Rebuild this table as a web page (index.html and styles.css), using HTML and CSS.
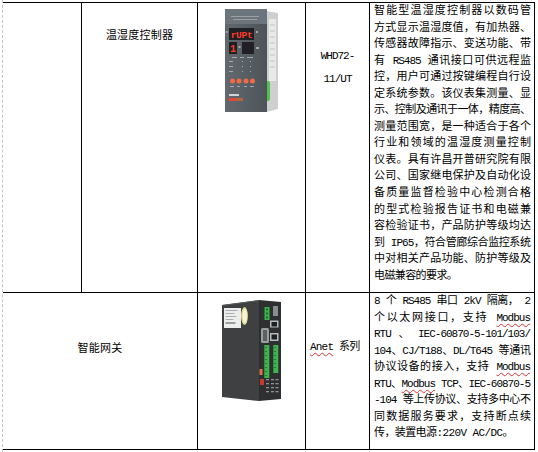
FILE: index.html
```html
<!DOCTYPE html>
<html lang="zh-CN">
<head>
<meta charset="utf-8">
<title>产品清单</title>
<link rel="stylesheet" href="styles.css">
</head>
<body>
<div class="page">
  <div class="spec">
    <div class="cell"></div>
    <div class="cell name name-top">温湿度控制器</div>
    <div class="cell pic pic-top">
      <svg width="54" height="104" viewBox="0 0 54 104">
        <defs>
          <linearGradient id="fp" x1="0" x2="1" y1="0" y2="0">
            <stop offset="0" stop-color="#626a70"/>
            <stop offset="1" stop-color="#4c5459"/>
          </linearGradient>
        </defs>
        <polygon points="41,2 53,4 53,100 41,103" fill="#cdd0cf"/>
        <rect x="44" y="10" width="7" height="62" fill="#e8eae9"/>
        <g stroke="#a9adac" stroke-width="0.6">
          <line x1="45" y1="16" x2="50" y2="16"/><line x1="45" y1="22" x2="50" y2="22"/>
          <line x1="45" y1="28" x2="50" y2="28"/><line x1="45" y1="34" x2="50" y2="34"/>
          <line x1="45" y1="40" x2="50" y2="40"/><line x1="45" y1="46" x2="50" y2="46"/>
          <line x1="45" y1="52" x2="50" y2="52"/><line x1="45" y1="58" x2="50" y2="58"/>
        </g>
        <rect x="40" y="72" width="5" height="20" rx="2" fill="#52c04f"/>
        <rect x="0" y="0" width="42" height="103" fill="url(#fp)"/>
        <rect x="0" y="0" width="42" height="15" fill="#6c757b"/>
        <g fill="#9aa2a7">
          <rect x="6" y="7" width="28" height="1"/>
          <rect x="8" y="10" width="24" height="1"/>
        </g>
        <rect x="4" y="19" width="25" height="12" fill="#202024"/>
        <text x="16.5" y="28.5" font-family="Liberation Mono, monospace" font-size="9.5" font-weight="bold" fill="#ff3a2a" text-anchor="middle" letter-spacing="-0.3">rUPt</text>
        <rect x="4" y="33" width="8" height="12" fill="#202024"/>
        <text x="8" y="43" font-family="Liberation Mono, monospace" font-size="10" font-weight="bold" fill="#ff3a2a" text-anchor="middle">1</text>
        <rect x="17" y="33" width="12" height="12" fill="#202024"/>
        <g fill="#a3aaaf">
          <rect x="1" y="22" width="1.5" height="2"/>
          <rect x="31" y="22" width="2" height="2"/>
          <rect x="31" y="38" width="3" height="2"/>
          <rect x="13.5" y="37" width="2" height="2"/>
          <rect x="7" y="48" width="5" height="1"/><rect x="15" y="48" width="4" height="1"/><rect x="22" y="48" width="6" height="1"/>
          <rect x="4" y="52" width="4" height="1"/><rect x="4" y="57" width="4" height="1"/><rect x="4" y="62" width="4" height="1"/>
          <rect x="17" y="52" width="1" height="1"/><rect x="25" y="52" width="1" height="1"/>
          <rect x="17" y="57" width="1" height="1"/><rect x="25" y="57" width="1" height="1"/>
          <rect x="17" y="62" width="1" height="1"/><rect x="25" y="62" width="1" height="1"/>
          <rect x="5" y="77" width="4" height="1"/><rect x="12" y="77" width="3" height="1"/>
          <rect x="19" y="77" width="3" height="1"/><rect x="25" y="77" width="4" height="1"/>
        </g>
        <g fill="#f36a45">
          <circle cx="7.5" cy="72" r="2.5"/><circle cx="14" cy="72" r="2.5"/>
          <circle cx="21" cy="72" r="2.5"/><circle cx="27.5" cy="72" r="2.5"/>
        </g>
        <rect x="4" y="85" width="10" height="2" fill="#d0d4d7"/>
        <rect x="4" y="89" width="7" height="3" fill="#e4462f"/>
        <rect x="11" y="89" width="7" height="3" fill="#b9623f"/>
      </svg>
    </div>
    <div class="cell model model-top">WHD72-<br>11/UT</div>
    <div class="cell desc">
      <span class="ln">智能型温湿度控制器以数码管</span>
      <span class="ln">方式显示温湿度值，有加热器、</span>
      <span class="ln">传感器故障指示、变送功能、带</span>
      <span class="ln">有 RS485 通讯接口可供远程监</span>
      <span class="ln">控，用户可通过按键编程自行设</span>
      <span class="ln">定系统参数。该仪表集测量、显</span>
      <span class="ln">示、控制及通讯于一体，精度高、</span>
      <span class="ln">测量范围宽，是一种适合于各个</span>
      <span class="ln">行业和领域的温湿度测量控制</span>
      <span class="ln">仪表。具有许昌开普研究院有限</span>
      <span class="ln">公司、国家继电保护及自动化设</span>
      <span class="ln">备质量监督检验中心检测合格</span>
      <span class="ln">的型式检验报告证书和电磁兼</span>
      <span class="ln">容检验证书，产品防护等级均达</span>
      <span class="ln">到 IP65，符合管廊综合监控系统</span>
      <span class="ln">中对相关产品功能、防护等级及</span>
      <span class="ln end">电磁兼容的要求。</span>
    </div>

    <div class="cell name name-bottom wide">智能网关</div>
    <div class="cell pic pic-bottom">
      <svg width="60" height="101" viewBox="0 0 60 101">
        <polygon points="37,0 59,2 59,99 37,101" fill="#2d2f30"/>
        <polygon points="0,5 37,0 37,101 0,97" fill="#3e4041"/>
        <polygon points="0,5 37,0 38,1 1,6" fill="#555859"/>
        <rect x="2" y="8" width="17" height="20" fill="#eceeee"/>
        <g fill="#9a9e9f">
          <rect x="3.5" y="10" width="12" height="0.8"/><rect x="3.5" y="13" width="9" height="0.8"/>
          <rect x="3.5" y="16" width="11" height="0.8"/><rect x="3.5" y="19" width="8" height="0.8"/>
          <rect x="3.5" y="22" width="10" height="2"/>
        </g>
        <ellipse cx="22.5" cy="16" rx="3.4" ry="9" fill="#e5d98a"/>
        <ellipse cx="22.8" cy="16" rx="2.2" ry="7" fill="#f6f3d8"/>
        <rect x="42.5" y="7" width="5" height="13" fill="#39b54a"/>
        <rect x="44" y="8.5" width="2" height="2" fill="#1f6f2a"/><rect x="44" y="12.5" width="2" height="2" fill="#1f6f2a"/><rect x="44" y="16.5" width="2" height="2" fill="#1f6f2a"/>
        <rect x="51" y="6" width="5" height="10" fill="#8a8d8e"/>
        <rect x="39" y="28" width="8" height="15" rx="1.5" fill="#9c9fa0"/>
        <rect x="41" y="30" width="4" height="11" fill="#5e6162"/>
        <rect x="48" y="20.5" width="8.5" height="7" fill="#b8bbbc"/>
        <rect x="49.5" y="22" width="5.5" height="4.5" fill="#1e1f20"/>
        <rect x="48" y="33" width="8.5" height="8" fill="#b8bbbc"/>
        <rect x="49.5" y="34.5" width="5.5" height="5" fill="#1e1f20"/>
        <rect x="42.3" y="45" width="5" height="33" fill="#3fb34d"/>
        <rect x="51.3" y="45" width="5" height="28" fill="#3fb34d"/>
        <g fill="#1d6a29">
          <rect x="43.3" y="47" width="1.5" height="1"/><rect x="43.3" y="51" width="1.5" height="1"/><rect x="43.3" y="55" width="1.5" height="1"/>
          <rect x="43.3" y="59" width="1.5" height="1"/><rect x="43.3" y="63" width="1.5" height="1"/><rect x="43.3" y="67" width="1.5" height="1"/>
          <rect x="43.3" y="71" width="1.5" height="1"/><rect x="43.3" y="75" width="1.5" height="1"/>
          <rect x="52.3" y="47" width="1.5" height="1"/><rect x="52.3" y="51" width="1.5" height="1"/><rect x="52.3" y="55" width="1.5" height="1"/>
          <rect x="52.3" y="59" width="1.5" height="1"/><rect x="52.3" y="63" width="1.5" height="1"/><rect x="52.3" y="67" width="1.5" height="1"/>
        </g>
        <rect x="37.5" y="69" width="3" height="6" fill="#e0714f"/>
        <rect x="38" y="79" width="4" height="6" fill="#c93a2c"/>
        <g fill="#8f9293">
          <rect x="44" y="79" width="3" height="1.3"/><rect x="49" y="79" width="3" height="1.3"/><rect x="53.5" y="79" width="3" height="1.3"/>
          <rect x="44" y="83" width="3" height="1.3"/><rect x="49" y="83" width="3" height="1.3"/><rect x="53.5" y="83" width="3" height="1.3"/>
          <rect x="44" y="87" width="3" height="1.3"/><rect x="49" y="87" width="3" height="1.3"/><rect x="53.5" y="87" width="3" height="1.3"/>
          <rect x="44" y="91" width="3" height="1.3"/><rect x="49" y="91" width="3" height="1.3"/><rect x="53.5" y="91" width="3" height="1.3"/>
        </g>
      </svg>
    </div>
    <div class="cell model model-bottom"><u class="typo">Anet</u> 系列</div>
    <div class="cell desc">
      <span class="ln">8 个 RS485 串口 2kV 隔离， 2</span>
      <span class="ln">个以太网接口，支持 <u class="typo">Modbus</u></span>
      <span class="ln">RTU 、 IEC-60870-5-101/103/</span>
      <span class="ln">104、CJ/T188、DL/T645 等通讯</span>
      <span class="ln">协议设备的接入，支持 <u class="typo">Modbus</u></span>
      <span class="ln">RTU、<u class="typo">Modbus</u> TCP、IEC-60870-5</span>
      <span class="ln">-104 等上传协议、支持多中心不</span>
      <span class="ln">同数据服务要求，支持断点续</span>
      <span class="ln end">传，装置电源:220V AC/DC。</span>
    </div>
  </div>
</div>
</body>
</html>
```

FILE: styles.css
```css
html, body {
  margin: 0;
  padding: 0;
  background: #fff;
}

body {
  width: 538px;
  height: 452px;
  overflow: hidden;
  font-family: "Noto Sans CJK SC", sans-serif;
  color: #000;
}

.page {
  box-sizing: border-box;
  height: 452px;
  margin-left: 2px;
  padding-top: 2px;
  border-left: 1px dashed #c4c4c4;
}

.spec {
  display: grid;
  grid-template-columns: 78px 115px 107px 63px 164px;
  grid-template-rows: 289px 156px;
  gap: 1px;
  width: max-content;
  padding: 1px 1px 1px 0;
  background: #000;
}

.cell {
  background: #fff;
  box-sizing: border-box;
}

.wide {
  grid-column: span 2;
}

.name {
  font-size: 11px;
  line-height: 16px;
  text-align: center;
  letter-spacing: 0.2px;
}

.name-top { padding-top: 23px; }
.name-bottom { padding-top: 46px; }

.pic {
  display: flex;
  justify-content: center;
  align-items: flex-start;
}

.pic-top { padding-top: 6px; }
.pic-bottom { padding-top: 7px; }

.model {
  font-family: "Liberation Mono", "Noto Sans CJK SC", monospace;
  font-size: 11px;
  letter-spacing: -1px;
  color: #000;
}

.model-top {
  padding-top: 42px;
  line-height: 23px;
  text-align: center;
}

.model-bottom {
  padding: 46px 0 0 4px;
  line-height: 16px;
  letter-spacing: -0.8px;
}

.desc {
  padding: 0 4px 0 4px;
  font-family: "Liberation Mono", "Noto Sans CJK SC", monospace;
  font-size: 11px;
  line-height: 16.55px;
  letter-spacing: -1px;
  color: #000;
}

.ln {
  display: block;
  text-align: justify;
  text-align-last: justify;
}

.ln.end {
  text-align-last: left;
  letter-spacing: -0.6px;
}

.typo {
  text-decoration: underline wavy #e03030;
  text-decoration-thickness: 1px;
  text-underline-offset: 2px;
}
```
